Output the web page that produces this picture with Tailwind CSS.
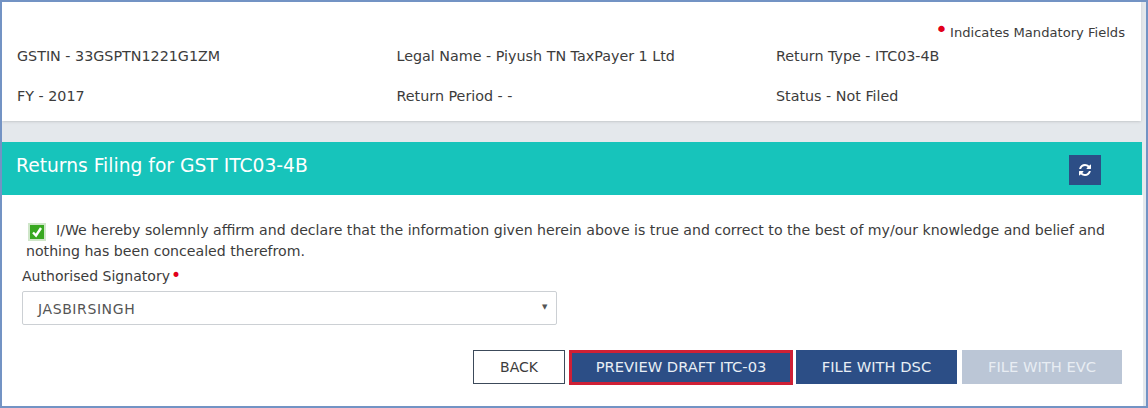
<!DOCTYPE html>
<html lang="en">
<head>
    <meta charset="UTF-8" />
    <title>Returns Filing</title>
    <script src="https://cdn.jsdelivr.net/npm/@tailwindcss/browser@4"></script>
</head>
<body class="bg-white">
    <div class="w-[1148px] h-[408px] overflow-hidden border-2 border-[#7393c4] bg-[#e4e8ec] text-[#3c3c3c] text-[14.3px] font-['DejaVu_Sans',sans-serif] flex flex-col">
        <!-- summary -->
        <div class="h-[119px] mr-[5px] bg-white shadow-sm">
            <div class="h-[40px] pr-[16px] flex justify-end items-start pt-[21px] text-[13.1px] leading-[18px]">
                <span class="text-[#e2001a] text-[22px] leading-[12px] mr-[2px] mt-[1px]">•</span>
                <span class="mt-[1px]">Indicates Mandatory Fields</span>
            </div>
            <div class="grid grid-cols-[379.5px_379.5px_1fr] pl-[15px] gap-y-[22px] mt-[5px] leading-[18px]">
                <div>GSTIN - 33GSPTN1221G1ZM</div>
                <div>Legal Name - Piyush TN TaxPayer 1 Ltd</div>
                <div>Return Type - ITC03-4B</div>
                <div>FY - 2017</div>
                <div>Return Period - -</div>
                <div>Status - Not Filed</div>
            </div>
        </div>
        <div class="h-[21px]"></div>
        <!-- header bar -->
        <div class="h-[53px] mr-[4px] bg-[#17c4bb] flex items-center justify-between pl-[14px] pr-[41px]">
            <h1 class="text-white text-[18.7px] leading-[48px] mb-[5px]">Returns Filing for GST ITC03-4B</h1>
            <button class="w-[32px] h-[30px] bg-[#2c4e86] flex items-center justify-center mt-[3px]">
                <svg width="14" height="14" viewBox="0 0 1792 1792" fill="#fff">
                    <path d="M1639 1056q0 5-1 7-64 268-268 434.5t-478 166.5q-146 0-282.5-55t-243.5-157l-129 129q-19 19-45 19t-45-19-19-45v-448q0-26 19-45t45-19h448q26 0 45 19t19 45-19 45l-137 137q71 66 161 102t187 36q134 0 250-65t186-179q11-17 53-117 8-23 30-23h192q13 0 22.5 9.5t9.5 22.5zm25-800v448q0 26-19 45t-45 19h-448q-26 0-45-19t-19-45 19-45l138-138q-148-137-349-137-134 0-250 65t-186 179q-11 17-53 117-8 23-30 23h-199q-13 0-22.5-9.5t-9.5-22.5v-7q65-268 270-434.5t480-166.5q146 0 284 55.5t245 156.5l130-129q19-19 45-19t45 19 19 45z" />
                </svg>
            </button>
        </div>
        <!-- form -->
        <div class="flex-1 mr-[3px] bg-white pl-[20px] pr-[21px]">
            <p class="pl-[4px] pt-[25px] text-[14.13px] leading-[21px]">
                <span class="inline-flex align-[-3px] w-[18px] h-[18px] bg-[#38a820] border-2 border-[#cfe6c9] items-center justify-center ml-[2px] mr-[10px]">
                    <svg width="12" height="12" viewBox="0 0 12 12" fill="none" stroke="#fff" stroke-width="2.4"><path d="M2 6.5l3 3 5-7.5" /></svg>
                </span>I/We hereby solemnly affirm and declare that the information given herein above is true and correct to the best of my/our knowledge and belief and nothing has been concealed therefrom.
            </p>
            <label class="block mt-[5px] leading-[18px] text-[14.05px]">Authorised Signatory<span class="text-[#e2001a] ml-[1px] text-[17px] leading-[12px]">•</span></label>
            <div class="w-[535px] h-[34px] mt-[6px] border border-[#ccd0d4] rounded-[2px] flex items-center justify-between pl-[15px] pr-[8px] text-[#555] text-[14px] tracking-[0.6px]">
                <span class="mt-[2px]">JASBIRSINGH</span>
                <span class="text-[7px] mb-[2px]">▼</span>
            </div>
            <div class="flex justify-end mt-[25px] text-[14.7px]">
                <button class="w-[92px] h-[34px] border border-[#3c4a5a] bg-white text-[14px]">BACK</button>
                <button class="w-[224px] h-[35px] ml-[4px] bg-[#2c4e86] border-[3px] border-[#cf2035] text-[#e8eef5]">PREVIEW DRAFT ITC-03</button>
                <button class="w-[161px] h-[34px] ml-[3px] bg-[#2c4e86] text-[#e8eef5]">FILE WITH DSC</button>
                <button class="w-[160px] h-[34px] ml-[5px] bg-[#bbc6d6] text-[#e8edf3]">FILE WITH EVC</button>
            </div>
        </div>
    </div>
</body>
</html>
